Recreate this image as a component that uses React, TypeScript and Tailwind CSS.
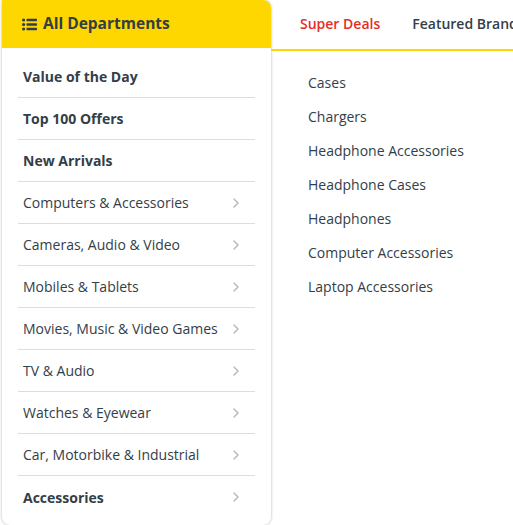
import { ChevronRight } from 'lucide-react';

const menu = [
    { name: 'Value of the Day', bold: true, arrow: false },
    { name: 'Top 100 Offers', bold: true, arrow: false },
    { name: 'New Arrivals', bold: true, arrow: false },
    { name: 'Computers & Accessories', bold: false, arrow: true },
    { name: 'Cameras, Audio & Video', bold: false, arrow: true },
    { name: 'Mobiles & Tablets', bold: false, arrow: true },
    { name: 'Movies, Music & Video Games', bold: false, arrow: true },
    { name: 'TV & Audio', bold: false, arrow: true },
    { name: 'Watches & Eyewear', bold: false, arrow: true },
    { name: 'Car, Motorbike & Industrial', bold: false, arrow: true },
    { name: 'Accessories', bold: true, arrow: true },
];

const subItems = [
    'Cases',
    'Chargers',
    'Headphone Accessories',
    'Headphone Cases',
    'Headphones',
    'Computer Accessories',
    'Laptop Accessories',
];

function ListIcon() {
    return (
        <svg width="15" height="13" viewBox="0 0 15 13" fill="#333e48">
            <circle cx="1.6" cy="2" r="1.6" />
            <circle cx="1.6" cy="6.5" r="1.6" />
            <circle cx="1.6" cy="11" r="1.6" />
            <rect x="4.5" y="0.8" width="10.5" height="2.4" rx="0.6" />
            <rect x="4.5" y="5.3" width="10.5" height="2.4" rx="0.6" />
            <rect x="4.5" y="9.8" width="10.5" height="2.4" rx="0.6" />
        </svg>
    );
}

export default function App() {
    return (
        <div className="w-[513px] h-[525px] bg-white overflow-hidden flex font-['Open_Sans',sans-serif] text-[#333e48]">
            <div className="ml-[2px] w-[269px] flex flex-col shrink-0 shadow-[0_0_3px_rgba(0,0,0,0.3)] rounded-b-lg rounded-tr-lg bg-white">
                <div className="h-12 bg-[#fed700] rounded-tr-lg flex items-center gap-[6px] pl-5">
                    <ListIcon />
                    <span className="text-[15.5px] font-bold">All Departments</span>
                </div>
                <div className="pt-2 px-4">
                    {menu.map((m, i) => (
                        <div
                            key={m.name}
                            className={
                                'h-[42px] flex items-center justify-between pl-[5px] pr-[11px] text-[14px] ' +
                                (i < menu.length - 1 ? 'border-b border-[#dddddd] ' : '') +
                                (m.bold ? 'font-bold' : 'text-[#333e48]')
                            }
                        >
                            <span>{m.name}</span>
                            {m.arrow && <ChevronRight size={16} strokeWidth={2} className="text-[#b5b5b5]" />}
                        </div>
                    ))}
                </div>
            </div>
            <div className="flex-1 min-w-0 flex flex-col">
                <div className="h-[51px] border-b-2 border-[#fed700] flex items-center gap-8 pl-[29px] pb-[3px] whitespace-nowrap overflow-hidden text-[14px] font-semibold">
                    <span className="text-[#e52d27]">Super Deals</span>
                    <span>Featured Brands</span>
                </div>
                <div className="pl-[37px] pt-[15px] flex flex-col">
                    {subItems.map((s) => (
                        <div key={s} className="leading-[34px] text-[14px] text-[#333e48]">{s}</div>
                    ))}
                </div>
            </div>
        </div>
    );
}
